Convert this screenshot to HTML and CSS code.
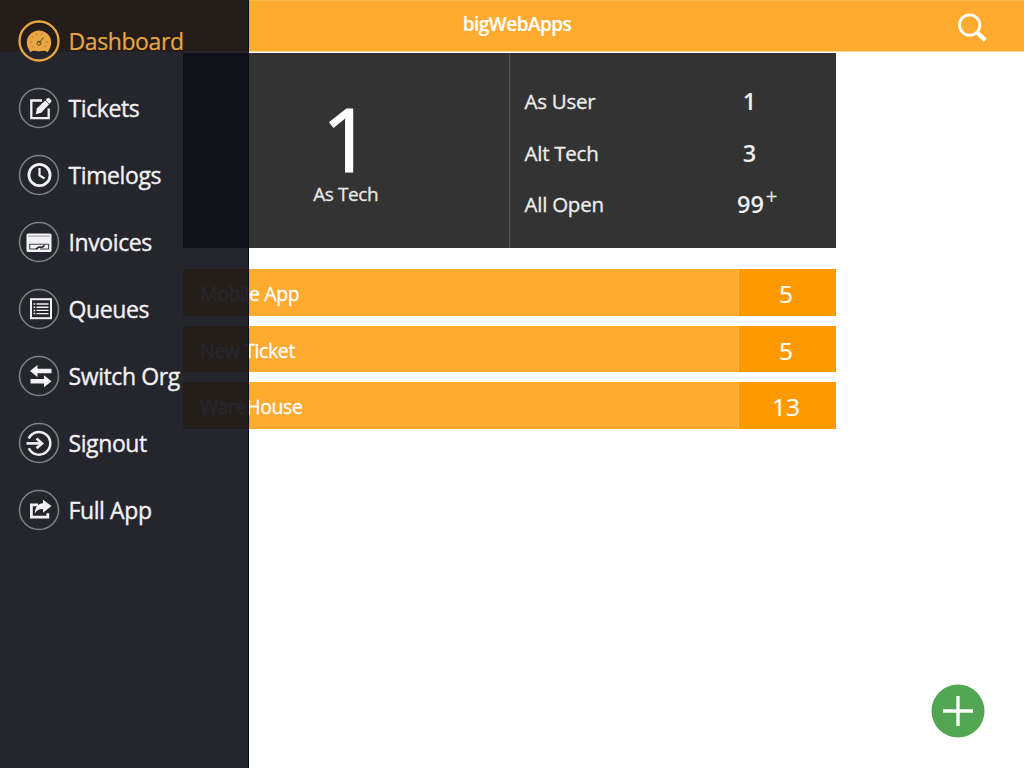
FILE: index.html
```html
<!DOCTYPE html>
<html lang="en">
<head>
<meta charset="utf-8">
<title>bigWebApps</title>
<link rel="stylesheet" href="styles.css">
</head>
<body>
<div class="app">
  <header class="topbar">
    <h1 class="brand">bigWebApps</h1>
    <svg class="search" viewBox="0 0 32 32" width="32" height="32"><circle cx="12.700" cy="12" r="10.2" fill="none" stroke="#fff" stroke-width="2.800"/><path d="M20 19.500l8.200 7.600" stroke="#fff" stroke-width="4.200"/></svg>
  </header>
  <main class="content">
    <section class="stats">
      <div class="primary">
        <div class="big">1</div>
        <div class="caption">As Tech</div>
      </div>
      <div class="counts">
        <div class="count"><span class="label">As User</span><span class="num">1</span></div>
        <div class="count"><span class="label">Alt Tech</span><span class="num">3</span></div>
        <div class="count"><span class="label">All Open</span><span class="num wide">99<span class="plus">+</span></span></div>
      </div>
    </section>
    <section class="queues">
      <div class="queue"><span class="name">Mobile App</span><span class="total">5</span></div>
      <div class="queue"><span class="name">New Ticket</span><span class="total">5</span></div>
      <div class="queue"><span class="name">WareHouse</span><span class="total">13</span></div>
    </section>
  </main>
  <nav class="sidebar">
    <a class="item active"><svg class="icon" viewBox="0 0 42 42"><circle class="ring" cx="21" cy="21" r="19.500"/><path d="M12.500 32.200Q8.800 27.500 8.800 22.500a12.200 12 0 0 1 24.400 0q0 5-3.700 9.700-2.500-2-5.500-1.200-3 .8-6 0-3-.8-5.500 1.200z" fill="currentColor"/><g stroke="#b07a35" stroke-width="1" fill="none"><path d="M12 22h2M13.800 16.300l1.500 1.200M18 13.300l.7 1.800M23.800 13.300l-.7 1.800M28 22h2M14 27l1.700-.9M28 27l-1.700-.9"/><path d="M21 23l4.500-5.500" stroke="#5d4020"/><circle cx="21" cy="23.200" r="2" stroke="#5d4020"/></g></svg><span>Dashboard</span></a>
    <a class="item"><svg class="icon" viewBox="0 0 42 42"><circle class="ring" cx="21" cy="21" r="19.500"/><path d="M24 13.500H13.300v17.700h17.400V21.500" fill="none" stroke="currentColor" stroke-width="2.300"/><path d="M17.700 27.300l1.300-6 10.500-10.100q1-.8 2 .2l1.600 1.600q.8.900 0 1.900L23.200 25.800z" fill="currentColor"/><path d="M26.800 12.800l4.600 4.300" stroke="#24242d" stroke-width=".8"/></svg><span>Tickets</span></a>
    <a class="item"><svg class="icon" viewBox="0 0 42 42"><circle class="ring" cx="21" cy="21" r="19.500"/><circle cx="21.500" cy="21" r="10.600" fill="none" stroke="currentColor" stroke-width="2.800"/><path d="M21.500 14v7.500l5 3" fill="none" stroke="currentColor" stroke-width="2.200"/></svg><span>Timelogs</span></a>
    <a class="item"><svg class="icon" viewBox="0 0 42 42"><circle class="ring" cx="21" cy="21" r="19.500"/><rect x="8.500" y="12.500" width="25" height="18.500" rx="1.500" fill="currentColor"/><path d="M10 15.200h22" stroke="#b8b8bc" stroke-width="1.500"/><path d="M11 23.300h20M12 28h7.500M22 28h8M11.700 23v5.500M30.600 23v5.500" stroke="#44444c" stroke-width="1.100"/><path d="M18 28l3-2 3 .3 2.500-2" fill="none" stroke="#24242d" stroke-width="1.600"/></svg><span>Invoices</span></a>
    <a class="item"><svg class="icon" viewBox="0 0 42 42"><circle class="ring" cx="21" cy="21" r="19.500"/><rect x="13" y="11.200" width="20" height="19" fill="none" stroke="currentColor" stroke-width="2"/><path d="M18.500 16h12M18.500 19.200h12M18.500 22.400h12M18.500 25.600h12" stroke="currentColor" stroke-width="1.400"/><path d="M15.500 16h1.700M15.500 19.200h1.700M15.500 22.400h1.700M15.500 25.600h1.700" stroke="currentColor" stroke-width="1.500"/></svg><span>Queues</span></a>
    <a class="item"><svg class="icon" viewBox="0 0 42 42"><circle class="ring" cx="21" cy="21" r="19.500"/><path d="M12 16l7.500-6v3.800h14v4.400h-14V22zM33.500 26.200l-7.500 6v-3.800H12.500V24H26v-3.800z" fill="currentColor"/></svg><span>Switch Org</span></a>
    <a class="item"><svg class="icon" viewBox="0 0 42 42"><circle class="ring" cx="21" cy="21" r="19.500"/><path d="M10.800 16.500a11.300 11.300 0 1 1 0 9.700" fill="none" stroke="currentColor" stroke-width="2.500"/><path d="M8.500 21.400h14" stroke="currentColor" stroke-width="2.600"/><path d="M18.500 16.500l5.500 4.900-5.500 4.900" fill="none" stroke="currentColor" stroke-width="2.600"/></svg><span>Signout</span></a>
    <a class="item"><svg class="icon" viewBox="0 0 42 42"><circle class="ring" cx="21" cy="21" r="19.500"/><path d="M20 15.800h-6.600v12.400h16.400v-4" fill="none" stroke="currentColor" stroke-width="2.800"/><path d="M33.500 17l-8.500-6.200v3.400q-8 .5-8.200 10.300 2.700-4.600 8.200-4.400v3.600z" fill="currentColor"/></svg><span>Full App</span></a>
  </nav>
  <button class="add" aria-label="Add"><svg viewBox="0 0 54 54" width="54" height="54"><circle cx="27" cy="27" r="26.500" fill="#52a552"/><path d="M27 12v30M12 27h30" stroke="#fff" stroke-width="3.300"/></svg></button>
</div>
</body>
</html>
```

FILE: styles.css
```css
* { box-sizing: border-box; }
body {
  margin: 0;
  background: #fff;
  font-family: "Open Sans", "Noto Sans", sans-serif;
  color: #fff;
}
.app {
  position: relative;
  width: 1024px;
  height: 768px;
  overflow: hidden;
}
.topbar {
  display: grid;
  grid-template-columns: 1fr auto 1fr;
  height: 52px;
  padding: 0 35px 0 45px;
  background: #ffab30;
  border-top: 1px solid #ffb84f;
  border-bottom: 1px solid #ffd394;
}
.brand {
  grid-column: 2;
  margin: 7.500px 0 0;
  font-size: 19px;
  line-height: 30px;
  font-weight: 600;
  letter-spacing: -0.55px;
  -webkit-text-stroke: 0.2px;
}
.search { justify-self: end; margin-top: 12px; }
.content { width: 653px; margin: 1px 0 0 183px; }
.stats {
  display: grid;
  grid-template-columns: 326.500px 1fr;
  height: 195px;
  background: #333;
}
.primary {
  border-right: 1px solid #555;
  text-align: center;
}
.big {
  height: 85px;
  margin: 44px 0 0 2px;
  font-size: 87px;
  line-height: 82px;
  -webkit-text-stroke: 1.2px;
}
.caption {
  font-size: 19px;
  line-height: 24px;
  letter-spacing: -0.4px;
  color: #e8e8e8;
  -webkit-text-stroke: 0.3px;
}
.counts { padding: 23px 0 0 15px; }
.count { display: flex; height: 51.500px; line-height: 52px; color: #eee; }
.label { width: 195px; font-size: 20.500px; line-height: 50px; letter-spacing: -0.25px; -webkit-text-stroke: 0.3px; }
.num { position: relative; width: 60px; font-size: 23.500px; line-height: 51px; font-weight: 600; text-align: center; }
.wide { left: 1px; }
.plus { position: absolute; left: 100%; margin-left: -15px; top: -8px; font-size: 21px; font-weight: 400; }
.queues { display: grid; gap: 10px; margin-top: 21px; }
.queue {
  display: grid;
  grid-template-columns: 555px 98px;
  height: 46.500px;
  background: #ffab30;
}
.name {
  height: 46.500px;
  padding-left: 17px;
  font-size: 19.500px;
  line-height: 50px;
  letter-spacing: -0.4px;
  -webkit-text-stroke: 0.3px;
}
.total {
  height: 46.500px;
  padding-right: 3px;
  background: #ff9900;
  border-left: 1px solid #ffb54a;
  font-size: 24.500px;
  line-height: 49px;
  text-align: center;
  -webkit-text-stroke: 0.2px;
}
.sidebar {
  position: absolute;
  left: 0;
  top: 0;
  width: 249px;
  height: 768px;
  padding: 20px 0 0 17.500px;
  background: rgba(14, 14, 23, 0.907);
  border-right: 1px solid #0c0c14;
}
.item {
  display: flex;
  gap: 9px;
  height: 67px;
  line-height: 42px;
  font-size: 23px;
  letter-spacing: -0.4px;
  color: #f2f2f4;
  white-space: nowrap;
  -webkit-text-stroke: 0.35px;
}
.active { color: #e9a743; -webkit-text-stroke: 0.2px; }
.icon { width: 42px; height: 42px; flex: none; }
.ring { fill: none; stroke: #808086; stroke-width: 1.500; }
.active .ring { stroke: #e9a743; stroke-width: 2.300; }
.add {
  position: absolute;
  left: 931px;
  top: 684px;
  width: 54px;
  height: 54px;
  padding: 0;
  border: 0;
  background: none;
}
.add svg { display: block; }
```
